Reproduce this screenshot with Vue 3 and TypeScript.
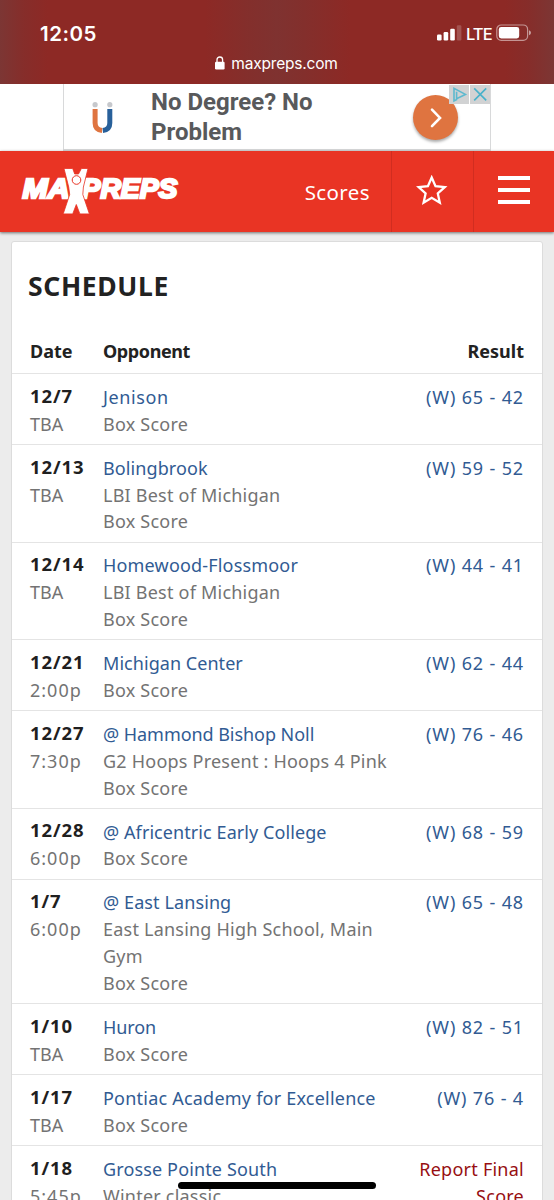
<script setup lang="ts">
interface Game {
  date: string
  time: string
  opponent: string
  tracking: number
  details: string[]
  result: string
  pending?: boolean
}

const games: Game[] = [
  { date: '12/7', time: 'TBA', opponent: 'Jenison', tracking: 0.6, details: ['Box Score'], result: '(W) 65 - 42' },
  { date: '12/13', time: 'TBA', opponent: 'Bolingbrook', tracking: 0.1, details: ['LBI Best of Michigan', 'Box Score'], result: '(W) 59 - 52' },
  { date: '12/14', time: 'TBA', opponent: 'Homewood-Flossmoor', tracking: 0.18, details: ['LBI Best of Michigan', 'Box Score'], result: '(W) 44 - 41' },
  { date: '12/21', time: '2:00p', opponent: 'Michigan Center', tracking: 0.05, details: ['Box Score'], result: '(W) 62 - 44' },
  { date: '12/27', time: '7:30p', opponent: '@ Hammond Bishop Noll', tracking: -0.05, details: ['G2 Hoops Present : Hoops 4 Pink', 'Box Score'], result: '(W) 76 - 46' },
  { date: '12/28', time: '6:00p', opponent: '@ Africentric Early College', tracking: 0.08, details: ['Box Score'], result: '(W) 68 - 59' },
  { date: '1/7', time: '6:00p', opponent: '@ East Lansing', tracking: 0.1, details: ['East Lansing High School, Main', 'Gym', 'Box Score'], result: '(W) 65 - 48' },
  { date: '1/10', time: 'TBA', opponent: 'Huron', tracking: -0.1, details: ['Box Score'], result: '(W) 82 - 51' },
  { date: '1/17', time: 'TBA', opponent: 'Pontiac Academy for Excellence', tracking: 0.22, details: ['Box Score'], result: '(W) 76 - 4' },
  { date: '1/18', time: '5:45p', opponent: 'Grosse Pointe South', tracking: 0.14, details: ['Winter classic'], result: 'Report Final Score', pending: true },
]
</script>

<template>
  <div class="screen">
    <header class="chrome">
      <div class="status">
        <span class="clock">12:05</span>
        <div class="indicators">
          <svg class="signal" width="25" height="16" viewBox="0 0 25 16">
            <rect x="0" y="9.5" width="4.6" height="6" rx="1.2" fill="#fff" />
            <rect x="6.6" y="7" width="4.6" height="8.5" rx="1.2" fill="#fff" />
            <rect x="13.2" y="3.7" width="4.6" height="11.8" rx="1.2" fill="#fff" />
            <rect x="19.8" y="0.3" width="4.6" height="15.2" rx="1.2" fill="#fff" opacity=".2" />
          </svg>
          <span class="network">LTE</span>
          <svg class="battery" width="36" height="18" viewBox="0 0 36 18">
            <rect x=".8" y="1" width="30.8" height="15.4" rx="4.4" fill="none" stroke="#fff" stroke-opacity=".5" stroke-width="1.2" />
            <rect x="2.8" y="3" width="20.4" height="11.4" rx="2.4" fill="#fff" />
            <path d="M33 6.2q2 .7 2 2.5t-2 2.5z" fill="#fff" opacity=".55" />
          </svg>
        </div>
      </div>
      <div class="address">
        <svg width="10" height="14" viewBox="0 0 10 14">
          <rect x="0" y="5.8" width="9.6" height="7.6" rx="1.2" fill="#fff" />
          <path d="M2 6.5V3.8a2.8 2.8 0 0 1 5.6 0v2.7" fill="none" stroke="#fff" stroke-width="1.3" />
        </svg>
        <span>maxpreps.com</span>
      </div>
    </header>

    <section class="ad">
      <div class="banner">
        <svg class="ad-logo" width="24" height="34" viewBox="0 0 24 34">
          <circle cx="4.1" cy="3.7" r="2.6" fill="#c6c8cc" />
          <circle cx="18.8" cy="3.7" r="2.6" fill="#c6c8cc" />
          <path d="M4.1 8v14q0 6.8 7 7.5" fill="none" stroke="#df7440" stroke-width="5" />
          <path d="M18.8 8v14q0 6.8-7 7.5" fill="none" stroke="#28609a" stroke-width="5" />
        </svg>
        <p class="ad-text">No Degree? No<br>Problem</p>
        <div class="ad-go">
          <svg width="45" height="45" viewBox="0 0 45 45">
            <path d="M19 14.7l8 8.2-8 8.2" fill="none" stroke="#fff" stroke-width="2.6" stroke-linecap="round" />
          </svg>
        </div>
        <div class="ad-tools">
          <svg width="20" height="19" viewBox="0 0 20 19">
            <rect width="20" height="19" fill="#d1d2d3" />
            <path d="M7.6 6.7v7l8.8-4.3L5 3.4v12.5l3.2-1.6" fill="none" stroke="#5db9cf" stroke-width="1.6" />
          </svg>
          <svg width="20" height="19" viewBox="0 0 20 19">
            <rect width="20" height="19" fill="#d1d2d3" />
            <path d="M4.2 3.4l12 12M16.2 3.4l-12 12" stroke="#48b1ca" stroke-width="1.6" />
          </svg>
        </div>
      </div>
    </section>

    <nav class="nav">
      <svg class="logo" width="170" height="50" viewBox="0 0 170 50">
        <g class="wordmark">
          <text x="2.500" y="31.200" textLength="47" lengthAdjust="spacingAndGlyphs">MA</text>
          <text x="61.500" y="31.200" textLength="96" lengthAdjust="spacingAndGlyphs">PREPS</text>
        </g>
        <path
          d="M44 1.500h8.700l2 5.500h3.800l2.900-5.500h6.600L63.400 20l-.6 7.500 6.600 19.400H59.900L56.300 37.500l-3.600 9.400h-9.500L49.700 27.500 48.700 20z"
          class="figure"
        />
        <circle cx="56.500" cy="13" r="4.300" class="head" />
      </svg>
      <span class="scores">Scores</span>
      <span class="tile star">
        <svg width="32" height="32" viewBox="0 0 32 32">
          <path d="M15.700 2.500l3.800 8.700 9.300.9-7 6.300 2 9.300-8.100-4.900-8.100 4.900 2-9.300-7-6.300 9.300-.9z" fill="none" stroke="#fff" stroke-width="2.300" />
        </svg>
      </span>
      <span class="tile menu"><i /><i /><i /></span>
    </nav>

    <main class="page">
      <section class="card">
        <h1>SCHEDULE</h1>
        <div class="row head-row">
          <span>Date</span>
          <span class="opponent-head">Opponent</span>
          <span class="result">Result</span>
        </div>
        <div v-for="game in games" :key="game.date" class="row game">
          <div class="when">
            <b>{{ game.date }}</b>
            <span :class="{ hour: game.time !== 'TBA' }">{{ game.time }}</span>
          </div>
          <div class="who">
            <a :style="{ letterSpacing: game.tracking + 'px' }">{{ game.opponent }}</a>
            <span v-for="line in game.details" :key="line">{{ line }}</span>
          </div>
          <a class="result" :class="game.pending ? 'pending' : 'score'">{{ game.result }}</a>
        </div>
      </section>
    </main>
    <div class="home-bar" />
  </div>
</template>

<style>
body {
  margin: 0;
  overflow: hidden;
}
</style>

<style scoped>
.screen {
  position: relative;
  display: flex;
  flex-direction: column;
  width: 554px;
  height: 1200px;
  overflow: hidden;
  background: #ececec;
  font-family: "Noto Sans", sans-serif;
}
.chrome {
  box-sizing: border-box;
  flex: none;
  height: 84px;
  color: #fff;
  font-family: Inter, sans-serif;
  background: linear-gradient(90deg, #7c3634 0, #862d2a 24px, #8d2925 48px, #8d2925 205px, #832f2c 250px, #7f3230 277px, #832f2c 304px, #8d2925 350px, #8d2925 505px, #862d2a 528px, #7c3634 554px);
}
.status {
  display: flex;
  justify-content: space-between;
  height: 54px;
  padding: 0 22px 0 40px;
  align-items: flex-start;
}
.clock {
  margin-top: 21px;
  font-size: 20.500px;
  line-height: 25px;
  font-weight: 600;
  letter-spacing: .5px;
}
.indicators {
  display: flex;
  align-items: flex-start;
  margin-top: 24px;
}
.signal { margin-top: 1px; }
.network {
  width: 27px;
  margin: 0 3px 0 4px;
  font-size: 16.500px;
  line-height: 21px;
  letter-spacing: -.9px;
  font-weight: 500;
}
.address {
  display: flex;
  justify-content: center;
  gap: 6px;
  height: 20px;
  padding-right: 1px;
  font-size: 15.500px;
  line-height: 20px;
  letter-spacing: -.2px;
}
.address svg { margin-top: 2px; }
.ad {
  flex: none;
  display: flex;
  justify-content: center;
  height: 67px;
  background: #fff;
}
.banner {
  position: relative;
  box-sizing: border-box;
  display: flex;
  width: 428px;
  height: 67px;
  border: solid #d8d9da;
  border-width: 0 1px 2px;
}
.ad-logo { margin: 17px 0 0 27px; }
.ad-text {
  flex: 1;
  margin: 3px 0 0 36px;
  color: #58595b;
  font: 700 24px/30px Roboto, sans-serif;
}
.ad-go {
  width: 45px;
  height: 45px;
  margin: 11px 32px 0 0;
  border-radius: 50%;
  background: #df7440;
  box-shadow: 0 2px 3px #0005;
}
.ad-tools {
  position: absolute;
  top: 1px;
  right: 0;
  display: flex;
  gap: 1px;
}
.nav {
  position: relative;
  z-index: 1;
  flex: none;
  display: flex;
  height: 81px;
  background: #e93424;
  box-shadow: 0 1px 3px #0008;
}
.logo { margin: 16px 0 0 20px; }
.wordmark {
  fill: #fff;
  stroke: #fff;
  stroke-width: 2.400;
  font: italic 700 28px "Liberation Sans", sans-serif;
}
.figure { fill: #fff; stroke: #e93424; stroke-width: .8; }
.head { fill: #fff; stroke: #e93424; stroke-width: 1; }
.scores {
  flex: 1;
  padding-right: 21px;
  text-align: right;
  color: #fff;
  font-size: 20.500px;
  line-height: 83px;
  letter-spacing: .4px;
}
.tile {
  box-sizing: border-box;
  display: flex;
  align-items: center;
  justify-content: center;
  width: 82px;
  border-left: 1px solid #d12d20;
}
.star { padding: 0 2px 2px 0; }
.menu {
  width: 81px;
  flex-direction: column;
  gap: 8px;
  padding-bottom: 4px;
}
.menu i {
  width: 32px;
  height: 4px;
  background: #fff;
}
.page { padding: 9px 11px 0; }
.card {
  box-sizing: border-box;
  height: 1000px;
  border: 1px solid #dcdcdc;
  border-radius: 3px;
  background: #fff;
}
h1 {
  margin: 0;
  padding: 26px 0 0 16px;
  color: #222;
  font-size: 26.500px;
  line-height: 36px;
  font-weight: 700;
  letter-spacing: .65px;
}
.row {
  display: grid;
  grid-template-columns: 73px 1fr 120px;
  padding: 0 18px;
}
.head-row {
  box-sizing: border-box;
  align-items: end;
  height: 69px;
  padding-bottom: 8px;
  color: #222;
  font-size: 18px;
  line-height: 27px;
  font-weight: 700;
}
.opponent-head { letter-spacing: -.4px; }
.game {
  box-sizing: border-box;
  padding-top: 9.850px;
  padding-bottom: 6.450px;
  border-top: 1px solid #e4e4e4;
  color: #737373;
  font-size: 18px;
  line-height: 26.800px;
}
.when, .who {
  display: flex;
  flex-direction: column;
  white-space: nowrap;
}
.when b {
  margin-top: -1.200px;
  color: #1f1f1f;
  font-size: 18.500px;
  letter-spacing: .9px;
}
.when span { margin-top: 1.200px; }
.when .hour { letter-spacing: 1px; }
.who span { letter-spacing: .22px; }
a { color: #315b93; }
.result { text-align: right; }
.score { letter-spacing: .85px; }
.pending { color: #970f12; letter-spacing: .25px; }
.home-bar {
  position: absolute;
  left: 178px;
  bottom: 11px;
  z-index: 2;
  width: 198px;
  height: 7px;
  border-radius: 4px;
  background: #000;
}
</style>
